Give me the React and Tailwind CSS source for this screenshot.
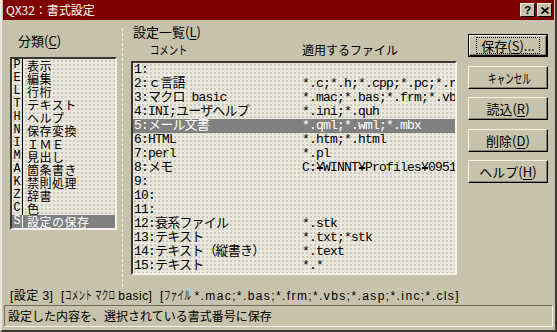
import React from 'react';

const leftItems = [
  ['P', '表示'], ['E', '編集'], ['L', '行桁'], ['T', 'テキスト'], ['H', 'ヘルプ'],
  ['N', '保存変換'], ['I', 'ＩＭＥ'], ['M', '見出し'], ['A', '箇条書き'], ['K', '禁則処理'],
  ['Z', '辞書'], ['C', '色'], ['S', '設定の保存'],
];

const rows = [
  ['1:', ''],
  ['2:ｃ言語', '*.c;*.h;*.cpp;*.pc;*.rc;*.def'],
  ['3:マクロ basic', '*.mac;*.bas;*.frm;*.vbs;*.asp'],
  ['4:INI;ユーザヘルプ', '*.ini;*.quh'],
  ['5:メール文書', '*.qml;*.wml;*.mbx'],
  ['6:HTML', '*.htm;*.html'],
  ['7:perl', '*.pl'],
  ['8:メモ', 'C:¥WINNT¥Profiles¥09510000'],
  ['9:', ''],
  ['10:', ''],
  ['11:', ''],
  ['12:衰系ファイル', '*.stk'],
  ['13:テキスト', '*.txt;*stk'],
  ['14:テキスト（縦書き）', '*.text'],
  ['15:テキスト', '*.*'],
];

const dots = "bg-[#eae8de] bg-[radial-gradient(circle,#cdc9b8_0.7px,transparent_0.9px)] bg-size-[4px_4px]";

// half-width katakana look: full-width glyphs squeezed horizontally
function Narrow({ text, w, scale }) {
  return (
    <span className={`inline-block whitespace-nowrap overflow-visible ${w}`}>
      <span className={`inline-block origin-left ${scale}`}>{text}</span>
    </span>
  );
}

function Btn({ def, children }) {
  return (
    <div className={`h-[23px] w-[80px] flex ${def ? 'border border-black' : ''}`}>
      <div className="flex-1 flex items-center justify-center border-t border-l border-[#f4f1e6] border-b border-r border-b-black border-r-black shadow-[inset_-1px_-1px_0_#85816e]">
        <div className={`flex items-center justify-center text-[13px] leading-[13px] whitespace-nowrap ${def ? 'outline outline-1 outline-dotted outline-black outline-offset-[1px] px-[3px]' : ''}`}>
          {children}
        </div>
      </div>
    </div>
  );
}

const U = ({ children }) => <span className="underline underline-offset-2">{children}</span>;

export default function App() {
  return (
    <div className="w-[557px] h-[332px] bg-[#c6c2ab] flex flex-col overflow-hidden border-l-2 border-l-[#e9e6d9] border-r-2 border-r-[#3b3930] border-b-2 border-b-[#3b3930] text-black font-['Noto_Sans_CJK_JP','Noto_Sans',sans-serif]">
      {/* title bar */}
      <div className="h-[20px] mx-[1px] bg-[#800000] flex items-center justify-between pl-[3px] pr-[2px]">
        <span className="text-white text-[12px] leading-[12px]">QX32：書式設定</span>
        <div className="flex gap-[2px]">
          <div className="w-[15px] h-[14px] bg-[#c6c2ab] border-t border-l border-[#f4f1e6] border-b border-r border-b-black border-r-black flex items-center justify-center text-[11px] font-bold leading-none font-['Liberation_Sans',sans-serif]">?</div>
          <div className="w-[15px] h-[14px] bg-[#c6c2ab] border-t border-l border-[#f4f1e6] border-b border-r border-b-black border-r-black flex items-center justify-center">
            <svg width="8" height="7" viewBox="0 0 8 7">
              <path d="M0.5 0.5 L7.5 6.5 M7.5 0.5 L0.5 6.5" stroke="black" strokeWidth="1.6" />
            </svg>
          </div>
        </div>
      </div>

      {/* body */}
      <div className="flex h-[267px]">
        {/* left: category */}
        <div className="w-[120px] flex flex-col pt-[14px] pl-[8px]">
          <div className="pl-[8px] h-[13px] text-[13px] leading-[13px]">
            分類(<U>C</U>)
          </div>
          <div className={`mt-[10px] w-[107px] h-[173px] border-2 border-t-[#3a3830] border-l-[#3a3830] border-b-[#f4f2ea] border-r-[#f4f2ea] ${dots}`}>
            {leftItems.map(([k, t], i) => (
              <div key={k} className={`flex h-[13px] text-[12px] leading-[13px] ${i === leftItems.length - 1 ? 'bg-[#808080] text-white' : ''}`}>
                <span className="w-[11px] text-center border-r border-current text-[12px] leading-[13px] font-['Liberation_Mono',monospace]">{k}</span>
                <span className="pl-[4px] whitespace-nowrap tracking-[0.5px]">{t}</span>
              </div>
            ))}
          </div>
        </div>

        {/* splitter */}
        <div className="mt-[8px] w-px border-l border-dashed border-[#f2efe2]" />

        {/* right: settings list */}
        <div className="w-[334px] flex flex-col pt-[5px]">
          <div className="pl-[10px] text-[13px] leading-[13px]">
            設定一覧(<U>L</U>)
          </div>
          <div className="flex mt-[5px] h-[13px] text-[12px] leading-[13px]">
            <span className="pl-[27px] w-[179px]">
              <Narrow text="コメント" w="w-[37px]" scale="scale-x-[0.78]" />
            </span>
            <span>適用するファイル</span>
          </div>
          <div className={`mt-[5px] ml-[8px] w-[326px] h-[214px] overflow-hidden border-2 border-t-[#3a3830] border-l-[#3a3830] border-b-[#f4f2ea] border-r-[#f4f2ea] ${dots}`}>
            {rows.map(([a, b], i) => (
              <div key={i} className={`flex h-[14px] text-[13px] leading-[14px] tracking-[-0.8px] whitespace-nowrap font-['Liberation_Mono','Noto_Sans_CJK_JP',monospace] ${i === 4 ? 'bg-[#808080] text-white' : ''}`}>
                <span className="w-[169px] shrink-0 pl-[1px]">{a}</span>
                <span>{b}</span>
              </div>
            ))}
          </div>
        </div>

        {/* buttons */}
        <div className="flex flex-col gap-[8.5px] pt-[14px] pl-[11px]">
          <Btn def>保存(<U>S</U>)...</Btn>
          <Btn><Narrow text="キャンセル" w="w-[40px]" scale="scale-x-[0.66]" /></Btn>
          <Btn>読込(<U>R</U>)</Btn>
          <Btn>削除(<U>D</U>)</Btn>
          <Btn>ヘルプ(<U>H</U>)</Btn>
        </div>
      </div>

      {/* status line */}
      <div className="h-[18px] pl-[8px] flex items-center text-[12px] leading-[12px] whitespace-nowrap tracking-[0.45px] font-['Liberation_Sans','Noto_Sans_CJK_JP',sans-serif]">
        <span>[設定 3]&nbsp;&nbsp;[</span>
        <Narrow text="コメント" w="w-[26px]" scale="scale-x-[0.54]" />
        <span>&nbsp;</span>
        <Narrow text="マクロ" w="w-[20px]" scale="scale-x-[0.54]" />
        <span>&nbsp;basic]&nbsp;&nbsp;[</span>
        <Narrow text="ファイル" w="w-[26px]" scale="scale-x-[0.54]" />
        <span className="tracking-[1.4px]">&nbsp;*.mac;*.bas;*.frm;*.vbs;*.asp;*.inc;*.cls]</span>
      </div>

      {/* bottom panel */}
      <div className="ml-[2px] w-[549px] h-[22px] flex items-center pl-[3px] border border-t-[#6e6b5c] border-l-[#6e6b5c] border-b-[#f4f2ea] border-r-[#f4f2ea] text-[12px] leading-[12px] whitespace-nowrap">
        設定した内容を、選択されている書式番号に保存
      </div>
    </div>
  );
}
